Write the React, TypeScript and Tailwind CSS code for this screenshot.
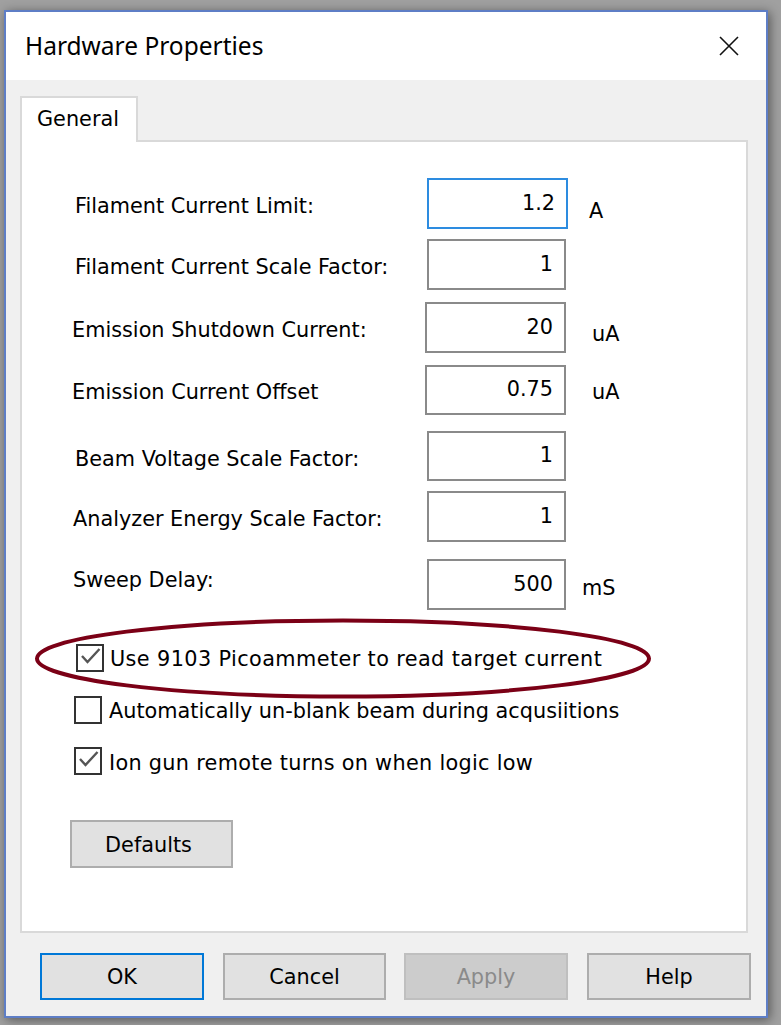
import React from "react";

const rows = [
  { label: "Filament Current Limit:", value: "1.2", unit: "A", rowCls: "mt-[36px] h-[51px]", labCls: "w-[405px] pl-[53px] pt-[7px]", inCls: "w-[141px] border-2 border-[#2d8ce0]", unitCls: "ml-[21px] mt-[17px]" },
  { label: "Filament Current Scale Factor:", value: "1", unit: "", rowCls: "mt-[10px] h-[51px]", labCls: "w-[405px] pl-[53px] pt-[6px]", inCls: "w-[139px] border-2 border-[#8a8a8a]", unitCls: "" },
  { label: "Emission Shutdown Current:", value: "20", unit: "uA", rowCls: "mt-[12px] h-[51px]", labCls: "w-[403px] pl-[50px] pt-[7px]", inCls: "w-[141px] border-2 border-[#8a8a8a]", unitCls: "ml-[26px] mt-[15px]" },
  { label: "Emission Current Offset", value: "0.75", unit: "uA", rowCls: "mt-[12px] h-[50px]", labCls: "w-[403px] pl-[50px] pt-[6px]", inCls: "w-[141px] border-2 border-[#8a8a8a]", unitCls: "ml-[26px] mt-[6px]" },
  { label: "Beam Voltage Scale Factor:", value: "1", unit: "", rowCls: "mt-[16px] h-[50px]", labCls: "w-[405px] pl-[53px] pt-[8px]", inCls: "w-[139px] border-2 border-[#8a8a8a]", unitCls: "" },
  { label: "Analyzer Energy Scale Factor:", value: "1", unit: "", rowCls: "mt-[10px] h-[51px]", labCls: "w-[405px] pl-[51px] pt-[6px]", inCls: "w-[139px] border-2 border-[#8a8a8a]", unitCls: "" },
  { label: "Sweep Delay:", value: "500", unit: "mS", rowCls: "mt-[17px] h-[51px]", labCls: "w-[405px] pl-[51px] mb-[8px]", inCls: "w-[139px] border-2 border-[#8a8a8a]", unitCls: "ml-[16px] mt-[8px]" },
];

const checks = [
  { label: "Use 9103 Picoammeter to read target current", checked: true, rowCls: "mt-[34px] pl-[54px]", gap: "ml-[6px] pt-[4px] tracking-[0.4px]" },
  { label: "Automatically un-blank beam during acqusiitions", checked: false, rowCls: "mt-[24px] pl-[52px]", gap: "ml-[7px] pt-[4px]" },
  { label: "Ion gun remote turns on when logic low", checked: true, rowCls: "mt-[23px] pl-[52px]", gap: "ml-[7px] pt-[5px] tracking-[0.3px]" },
];

function CheckBox({ checked }: { checked: boolean }) {
  return (
    <div className="w-[28px] h-[28px] border-2 border-[#333333] bg-white shrink-0">
      {checked && (
        <svg width="24" height="24" viewBox="0 0 24 24" className="block">
          <path d="M4 10 L9.5 16 L21.5 3" fill="none" stroke="#555555" strokeWidth="2.4" />
        </svg>
      )}
    </div>
  );
}

export default function App() {
  const font = { fontFamily: '"DejaVu Sans", Verdana, sans-serif' };
  return (
    <div className="relative w-[781px] h-[1025px] bg-[#a0a0a0] pt-[10px] pl-[4px] overflow-hidden">
      <div className="w-[764px] h-[1008px] border-2 border-[#5e7ec6] flex flex-col shadow-[2px_2px_10px_rgba(0,0,0,0.45)]">
        {/* title bar */}
        <div className="h-[68px] bg-white flex items-center justify-between pl-[19px] pr-[27px] shrink-0">
          <span className="text-[24.5px] text-black" style={{ fontFamily: '"Noto Sans", "Open Sans", sans-serif' }}>
            Hardware Properties
          </span>
          <svg width="20" height="20" viewBox="0 0 20 20">
            <path d="M1 1 L19 19 M19 1 L1 19" stroke="#111" strokeWidth="1.6" />
          </svg>
        </div>
        {/* body */}
        <div className="flex-1 bg-[#f0f0f0] pt-[16px] pl-[14px] pr-[18px] flex flex-col" style={font}>
          <div className="relative z-10 w-[118px] h-[46px] -mb-[2px] border-2 border-b-0 border-[#d9d9d9] bg-white flex items-center pl-[15px] text-[20.8px] text-black">
            General
          </div>
          <div className="h-[793px] border-2 border-[#d9d9d9] bg-white flex flex-col text-[20.8px] text-black">
            {rows.map((r) => (
              <div key={r.label} className={`flex items-center ${r.rowCls}`}>
                <div className={`${r.labCls} whitespace-nowrap`}>{r.label}</div>
                <div className={`${r.inCls} h-full bg-white flex items-center justify-end pr-[11px]`}>{r.value}</div>
                {r.unit && <div className={r.unitCls}>{r.unit}</div>}
              </div>
            ))}
            {checks.map((c) => (
              <div key={c.label} className={`flex items-center h-[28px] ${c.rowCls}`}>
                <CheckBox checked={c.checked} />
                <span className={`${c.gap} whitespace-nowrap`}>{c.label}</span>
              </div>
            ))}
            <div className="mt-[45px] ml-[48px] w-[163px] h-[48px] bg-[#e1e1e1] border-2 border-[#adadad] flex items-center justify-center pt-[3px] pr-[6px]">
              Defaults
            </div>
          </div>
          <div className="flex mt-[20px] pl-[20px] text-[20.8px]">
            <div className="shrink-0 w-[164px] h-[47px] bg-[#e1e1e1] border-2 border-[#0078d7] flex items-center justify-center pt-[3px] text-black">OK</div>
            <div className="shrink-0 ml-[19px] w-[163px] h-[47px] bg-[#e1e1e1] border-2 border-[#adadad] flex items-center justify-center pt-[3px] text-black">Cancel</div>
            <div className="shrink-0 ml-[18px] w-[164px] h-[47px] bg-[#cccccc] border-2 border-[#bfbfbf] flex items-center justify-center pt-[3px] text-[#8a8a8a]">Apply</div>
            <div className="shrink-0 ml-[19px] w-[164px] h-[47px] bg-[#e1e1e1] border-2 border-[#adadad] flex items-center justify-center pt-[3px] text-black">Help</div>
          </div>
        </div>
      </div>
      {/* annotation ellipse */}
      <svg className="absolute left-0 top-0 pointer-events-none" width="781" height="1025">
        <ellipse cx="343" cy="658.5" rx="306" ry="38" fill="none" stroke="#7b0016" strokeWidth="4" />
      </svg>
    </div>
  );
}
